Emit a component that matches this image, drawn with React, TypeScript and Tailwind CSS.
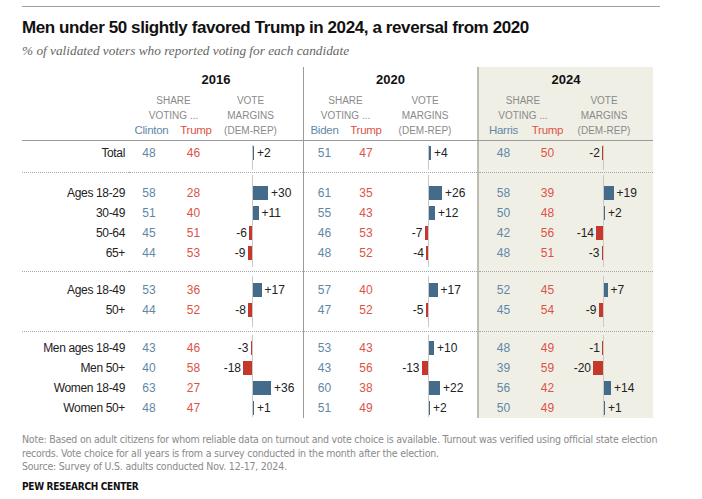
import React from "react";

type Y = [number, number, number];
type Row = { label: string; d: [Y, Y, Y] };
type Group = { first?: boolean; pt: string; pb: string; ax: string; rows: Row[] };

const groups: Group[] = [
  {
    first: true,
    pt: "pt-[2px]",
    pb: "pb-[9px]",
    ax: "mt-[4px] mb-[2px]",
    rows: [{ label: "Total", d: [[48, 46, 2], [51, 47, 4], [48, 50, -2]] }],
  },
  {
    pt: "pt-[10px]",
    pb: "pb-[8px]",
    ax: "mt-[2px] mb-[4px]",
    rows: [
      { label: "Ages 18-29", d: [[58, 28, 30], [61, 35, 26], [58, 39, 19]] },
      { label: "30-49", d: [[51, 40, 11], [55, 43, 12], [50, 48, 2]] },
      { label: "50-64", d: [[45, 51, -6], [46, 53, -7], [42, 56, -14]] },
      { label: "65+", d: [[44, 53, -9], [48, 52, -4], [48, 51, -3]] },
    ],
  },
  {
    pt: "pt-[8px]",
    pb: "pb-[11px]",
    ax: "mt-[4px] mb-[4px]",
    rows: [
      { label: "Ages 18-49", d: [[53, 36, 17], [57, 40, 17], [52, 45, 7]] },
      { label: "50+", d: [[44, 52, -8], [47, 52, -5], [45, 54, -9]] },
    ],
  },
  {
    pt: "pt-[6px]",
    pb: "pb-[0px]",
    ax: "mt-[3px] mb-[1px]",
    rows: [
      { label: "Men ages 18-49", d: [[43, 46, -3], [53, 43, 10], [48, 49, -1]] },
      { label: "Men 50+", d: [[40, 58, -18], [43, 56, -13], [39, 59, -20]] },
      { label: "Women 18-49", d: [[63, 27, 36], [60, 38, 22], [56, 42, 14]] },
      { label: "Women 50+", d: [[48, 47, 1], [51, 49, 2], [50, 49, 1]] },
    ],
  },
];

const blocks = [
  {
    year: "2016",
    dem: "Clinton",
    wrap: "w-[174px]",
    demW: "w-[40px]",
    repW: "w-[49px]",
    leftW: "w-[34px]",
    rightW: "w-[50px]",
    mhW: "w-[65px]",
    nameShift: "pl-[5px]",
  },
  {
    year: "2020",
    dem: "Biden",
    wrap: "w-[174px] border-l border-[#9a9a9a]",
    demW: "w-[41px]",
    repW: "w-[42px]",
    leftW: "w-[41px]",
    rightW: "w-[48px]",
    mhW: "w-[76px]",
    nameShift: "",
  },
  {
    year: "2024",
    dem: "Harris",
    wrap: "w-[176px] border-l-2 border-[#bdbdb4] bg-[#f0efe6]",
    demW: "w-[49px]",
    repW: "w-[39px]",
    leftW: "w-[36px]",
    rightW: "w-[49px]",
    mhW: "w-[74px]",
    nameShift: "",
  },
];

const BLUE_TXT = "text-[#5f87a8]";
const RED_TXT = "text-[#dc5346]";

function Dotted() {
  return <div className="h-px border-t border-dotted border-[#a6a6a6]" />;
}

function HeaderBlock({ b }: { b: (typeof blocks)[number] }) {
  return (
    <div className={`${b.wrap} flex flex-col pt-[5px] pb-[2px]`}>
      <div className="h-[16px] leading-[16px] text-center text-[13px] font-bold text-[#111]">{b.year}</div>
      <div className="mt-[5px] flex text-[10px] leading-[15px] text-[#8a8a8a]">
        <div className="flex flex-col">
          <div className="text-center">SHARE</div>
          <div className="text-center">VOTING ...</div>
          <div className="flex text-[11.5px] tracking-[-0.25px]">
            <div className={`${b.demW} ${b.nameShift} text-center ${BLUE_TXT}`}>{b.dem}</div>
            <div className={`${b.repW} ${b.nameShift} text-center ${RED_TXT}`}>Trump</div>
          </div>
        </div>
        <div className={`${b.mhW} flex flex-col text-center`}>
          <div>VOTE</div>
          <div>MARGINS</div>
          <div>(DEM-REP)</div>
        </div>
      </div>
    </div>
  );
}

function GroupBlock({ g, b, i }: { g: Group; b: (typeof blocks)[number]; i: number }) {
  return (
    <div className={`${b.wrap} flex flex-col`}>
      {!g.first && <Dotted />}
      <div className="flex flex-1">
        <div className={`${b.demW} ${g.pt} ${g.pb} flex flex-col`}>
          {g.rows.map((r) => (
            <div key={r.label} className={`h-[20px] leading-[20px] text-center ${BLUE_TXT}`}>
              {r.d[i][0]}
            </div>
          ))}
        </div>
        <div className={`${b.repW} ${g.pt} ${g.pb} flex flex-col`}>
          {g.rows.map((r) => (
            <div key={r.label} className={`h-[20px] leading-[20px] text-center ${RED_TXT}`}>
              {r.d[i][1]}
            </div>
          ))}
        </div>
        <div className={`${b.leftW} ${g.pt} ${g.pb} flex flex-col`}>
          {g.rows.map((r) => {
            const v = r.d[i][2];
            return (
              <div key={r.label} className="h-[20px] flex items-center justify-end text-[#222]">
                {v < 0 && (
                  <>
                    <span className="mr-[2px] leading-[20px]">{v}</span>
                    <div className="h-[14px] bg-[#c4392c]" style={{ width: Math.max(1, -v * 0.5) }} />
                  </>
                )}
              </div>
            );
          })}
        </div>
        <div className={`w-px bg-[#c9c9c9] ${g.ax}`} />
        <div className={`${b.rightW} ${g.pt} ${g.pb} flex flex-col`}>
          {g.rows.map((r) => {
            const v = r.d[i][2];
            return (
              <div key={r.label} className="h-[20px] flex items-center text-[#222]">
                {v > 0 && (
                  <>
                    <div className="h-[14px] bg-[#456b8a]" style={{ width: Math.max(1, v * 0.5) }} />
                    <span className="ml-[3px] leading-[20px]">+{v}</span>
                  </>
                )}
              </div>
            );
          })}
        </div>
      </div>
    </div>
  );
}

export default function App() {
  return (
    <div className="w-[702px] h-[499px] bg-white pl-[22px] pt-[6px] font-['Liberation_Sans',Arial,sans-serif] text-[12px] overflow-hidden">
      <div className="h-px w-[638px] bg-[#a0a0a0]" />
      <div className="mt-[11px] text-[17px] leading-[20px] font-bold tracking-[-0.4px] text-[#111]">
        Men under 50 slightly favored Trump in 2024, a reversal from 2020
      </div>
      <div className="mt-[5px] text-[13.3px] leading-[16px] italic text-[#666] font-['Liberation_Serif','Times_New_Roman',serif]">
        % of validated voters who reported voting for each candidate
      </div>

      <div className="mt-[8px] flex flex-col w-[631px]">
        <div className="flex border-b border-[#9a9a9a]">
          <div className="w-[107px]" />
          {blocks.map((b) => (
            <HeaderBlock key={b.year} b={b} />
          ))}
        </div>
        {groups.map((g, gi) => (
          <div key={gi} className="flex">
            <div className="w-[107px] flex flex-col">
              {!g.first && <Dotted />}
              <div className={`${g.pt} ${g.pb} pr-[4px] flex flex-col items-end`}>
                {g.rows.map((r) => (
                  <div key={r.label} className="h-[20px] leading-[20px] text-[#222] tracking-[-0.35px]">
                    {r.label}
                  </div>
                ))}
              </div>
            </div>
            {blocks.map((b, i) => (
              <GroupBlock key={b.year} g={g} b={b} i={i} />
            ))}
          </div>
        ))}
      </div>

      <div className="mt-[15px] w-[660px] text-[10.5px] leading-[13.5px] tracking-[-0.22px] text-[#8a8a8a] font-['Liberation_Sans_Narrow','DejaVu_Sans_Condensed',sans-serif]">
        Note: Based on adult citizens for whom reliable data on turnout and vote choice is available. Turnout was verified using official state election
        <br />
        records. Vote choice for all years is from a survey conducted in the month after the election.
        <br />
        Source: Survey of U.S. adults conducted Nov. 12-17, 2024.
      </div>
      <div className="mt-[6px] text-[10px] leading-[14px] font-bold tracking-[-0.3px] text-[#111] font-['Liberation_Sans_Narrow','DejaVu_Sans_Condensed',sans-serif]">
        PEW RESEARCH CENTER
      </div>
    </div>
  );
}
